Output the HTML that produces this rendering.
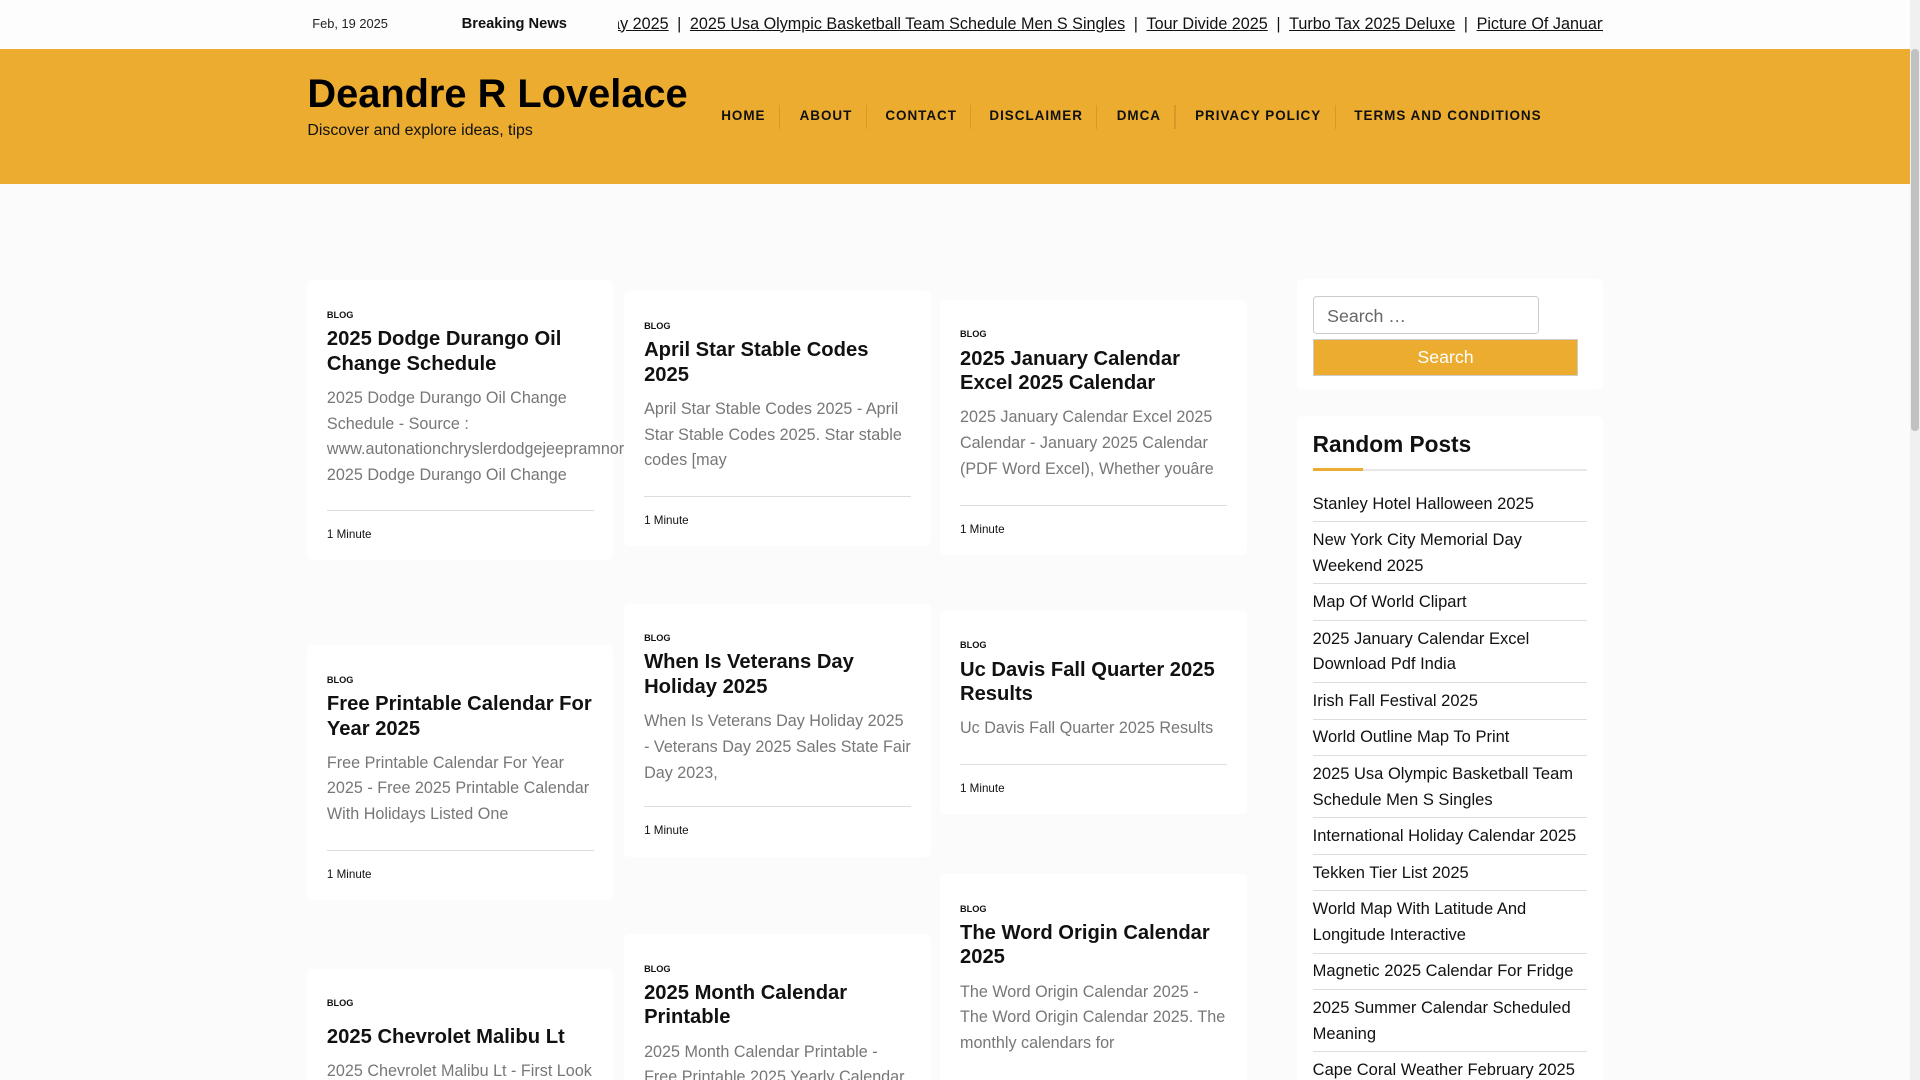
<!DOCTYPE html>
<html><head><meta charset="utf-8"><style>
html,body{margin:0;padding:0;background:#fbfbfb;overflow:hidden}
body{zoom:1.2245;width:1568px;height:882px;position:relative;font-family:"Liberation Sans",Arial,sans-serif;color:#111}
.top{position:absolute;left:0;top:0;width:1560px;height:40px;background:#fdfdfd}
.date{position:absolute;left:255px;top:13px;font-size:10.5px;color:#222}
.bn{position:absolute;left:377px;top:13px;font-size:12px;font-weight:bold}
.tick{position:absolute;left:505px;top:12px;width:804px;overflow:hidden;white-space:nowrap;font-size:13.2px}
.tick a{color:#111;text-decoration:underline}
.tick span{margin:0 7px}
.hdr{position:absolute;left:0;top:40px;width:1560px;height:110px;background:#ebac2f}
.title{position:absolute;left:251px;top:59px;font-size:32.5px;font-weight:bold;color:#000}
.tag{position:absolute;left:251px;top:100px;font-size:13px}
.nav div{position:absolute;top:88px;font-size:11px;font-weight:bold;letter-spacing:0.8px;color:#111;line-height:13px}
.sep{position:absolute;top:86px;width:1px;height:19px;background:#d89a26}
.sb{position:absolute;right:0;top:0;width:8px;height:882px;background:#f0f0f0}
.sb i{position:absolute;left:1px;top:40px;width:6px;height:312px;background:#c1c1c1;border-radius:3px}
.card{position:absolute;width:218px;background:#fff;border-radius:4px;padding:0 16px}
.cat{font-size:7.5px;font-weight:bold;margin-top:24px}
.ct{font-size:16.5px;font-weight:bold;line-height:20px;margin-top:6px;color:#111}
.ex{font-size:13.2px;color:#777;line-height:21px;margin-top:8px}
.ft{border-top:1px solid #ddd;font-size:9.5px;padding-top:14px;margin-top:14px;color:#111}
.wid{position:absolute;left:1059px;width:250px;background:#fff;border-radius:4px}
.inp{position:absolute;left:13px;top:14px;width:185px;height:31px;border:1px solid #ccc;border-radius:3px;font-size:14.5px;color:#666;box-sizing:border-box;padding:7px 11px}
.btn{position:absolute;left:13px;top:49px;width:217px;height:30px;background:#ebac2f;border:1px solid #ccc;box-sizing:border-box;color:#fff;font-size:14.5px;text-align:center;line-height:28px}
.rp{position:absolute;left:1072px;top:352px;width:224px}
.rp h3{margin:0;font-size:18.5px;font-weight:bold;height:31px;border-bottom:2px solid #e8e8e8;position:relative}
.rp h3:after{content:"";position:absolute;left:0;bottom:-2px;width:41px;height:3px;background:#ebac2f}
.rp div{font-size:13.5px;line-height:21px;padding:4px 0 4px;border-bottom:1px solid #ddd}
</style></head><body>
<div class="top">
<div class="date">Feb, 19 2025</div>
<div class="bn">Breaking News</div>
<div class="tick"><a style="margin-left:-36px">Holiday 2025</a><span>|</span><a>2025 Usa Olympic Basketball Team Schedule Men S Singles</a><span>|</span><a>Tour Divide 2025</a><span>|</span><a>Turbo Tax 2025 Deluxe</a><span>|</span><a>Picture Of January</a></div>
</div>
<div class="hdr"></div>
<div class="title">Deandre R Lovelace</div>
<div class="tag">Discover and explore ideas, tips</div>
<div class="nav"><div style="left:589px">HOME</div><div style="left:653px">ABOUT</div><div style="left:723px">CONTACT</div><div style="left:808px">DISCLAIMER</div><div style="left:912px">DMCA</div><div style="left:976px">PRIVACY POLICY</div><div style="left:1106px">TERMS AND CONDITIONS</div></div>
<div class="sep" style="left:636px"></div><div class="sep" style="left:707px"></div><div class="sep" style="left:792px"></div><div class="sep" style="left:895px"></div><div class="sep" style="left:959px"></div><div class="sep" style="left:1090px"></div>
<div class="sb"><i></i></div>

<div class="card" style="left:251px;top:229px;height:228px"><div class="cat">BLOG</div><div class="ct">2025 Dodge Durango Oil Change Schedule</div><div class="ex" style="white-space:nowrap;width:218px">2025 Dodge Durango Oil Change<br>Schedule - Source :<br>www.autonationchryslerdodgejeepramnorth<br>2025 Dodge Durango Oil Change</div><div class="ft" style="margin-top:17px">1 Minute</div></div>
<div class="card" style="left:251px;top:527px;height:208px"><div class="cat">BLOG</div><div class="ct">Free Printable Calendar For Year 2025</div><div class="ex">Free Printable Calendar For Year 2025 - Free 2025 Printable Calendar With Holidays Listed One</div><div class="ft" style="margin-top:18px">1 Minute</div></div>
<div class="card" style="left:251px;top:791px;height:100px"><div class="cat">BLOG</div><div class="ct" style="margin-top:14px">2025 Chevrolet Malibu Lt</div><div class="ex">2025 Chevrolet Malibu Lt - First Look</div></div>

<div class="card" style="left:510px;top:238px;height:208px"><div class="cat">BLOG</div><div class="ct">April Star Stable Codes 2025</div><div class="ex">April Star Stable Codes 2025 - April Star Stable Codes 2025. Star stable codes [may</div><div class="ft" style="margin-top:18px">1 Minute</div></div>
<div class="card" style="left:510px;top:493px;height:207px"><div class="cat">BLOG</div><div class="ct">When Is Veterans Day Holiday 2025</div><div class="ex">When Is Veterans Day Holiday 2025 - Veterans Day 2025 Sales State Fair Day 2023,</div><div class="ft" style="margin-top:16px">1 Minute</div></div>
<div class="card" style="left:510px;top:763px;height:130px"><div class="cat">BLOG</div><div class="ct">2025 Month Calendar Printable</div><div class="ex">2025 Month Calendar Printable - Free Printable 2025 Yearly Calendar</div></div>

<div class="card" style="left:768px;top:245px;height:208px"><div class="cat">BLOG</div><div class="ct">2025 January Calendar Excel 2025 Calendar</div><div class="ex">2025 January Calendar Excel 2025 Calendar - January 2025 Calendar (PDF Word Excel), Whether youâre</div><div class="ft" style="margin-top:18px">1 Minute</div></div>
<div class="card" style="left:768px;top:499px;height:166px"><div class="cat">BLOG</div><div class="ct">Uc Davis Fall Quarter 2025 Results</div><div class="ex">Uc Davis Fall Quarter 2025 Results</div><div class="ft" style="margin-top:18px">1 Minute</div></div>
<div class="card" style="left:768px;top:714px;height:180px"><div class="cat">BLOG</div><div class="ct">The Word Origin Calendar 2025</div><div class="ex">The Word Origin Calendar 2025 - The Word Origin Calendar 2025. The monthly calendars for</div></div>

<div class="wid" style="top:228px;height:90px"><div class="inp">Search …</div><div class="btn">Search</div></div>
<div class="wid" style="top:340px;height:560px"></div>
<div class="rp"><h3>Random Posts</h3>
<div style="margin-top:16px;padding-top:0">Stanley Hotel Halloween 2025</div>
<div>New York City Memorial Day Weekend 2025</div>
<div>Map Of World Clipart</div>
<div>2025 January Calendar Excel Download Pdf India</div>
<div>Irish Fall Festival 2025</div>
<div>World Outline Map To Print</div>
<div>2025 Usa Olympic Basketball Team Schedule Men S Singles</div>
<div>International Holiday Calendar 2025</div>
<div>Tekken Tier List 2025</div>
<div>World Map With Latitude And Longitude Interactive</div>
<div>Magnetic 2025 Calendar For Fridge</div>
<div>2025 Summer Calendar Scheduled Meaning</div>
<div>Cape Coral Weather February 2025</div>
</div>
</body></html>
